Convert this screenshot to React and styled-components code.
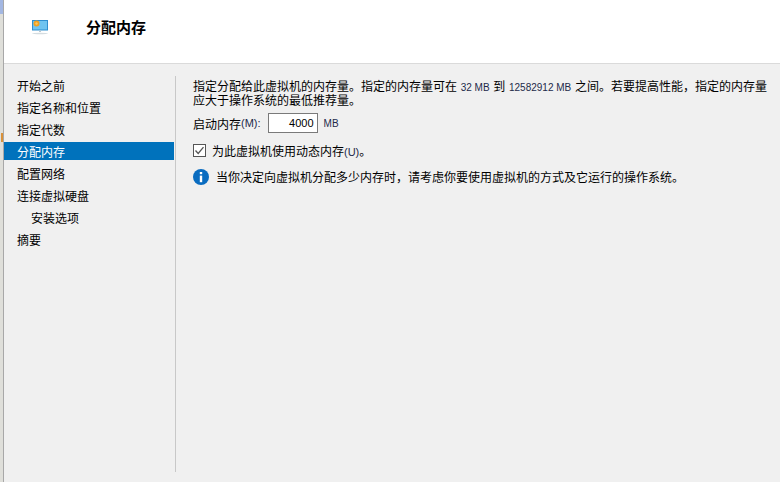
import React from "react";
import styled, { createGlobalStyle } from "styled-components";

const Global = createGlobalStyle`
  html, body {
    margin: 0;
    padding: 0;
    width: 780px;
    height: 482px;
    overflow: hidden;
    background: #f0f0f0;
  }
  body {
    font-family: "Noto Sans CJK SC", "Liberation Sans", sans-serif;
    font-size: 12px;
    color: #000;
  }
`;

const Window = styled.div`
  width: 780px;
  height: 482px;
  display: flex;
`;

// strip of the window behind this one
const LeftEdge = styled.div`
  width: 4px;
  flex-shrink: 0;
  display: flex;
  flex-direction: column;
  background: #dfdfda;
  border-right: 1px solid #a8a8a8;
  box-sizing: border-box;
`;

const EdgeTop = styled.div`
  height: 14px;
  background: #a3b7e2;
`;

const EdgeTick = styled.div`
  width: 2px;
  height: 9px;
  margin: 119px 0 0 1px;
  background: #d9913a;
`;

const Content = styled.div`
  flex: 1;
  min-width: 0;
  display: flex;
  flex-direction: column;
`;

const Banner = styled.header`
  height: 64px;
  flex-shrink: 0;
  box-sizing: border-box;
  display: flex;
  align-items: center;
  padding-left: 28px;
  padding-bottom: 9px;
  background: #fff;
  border-bottom: 1px solid #dadada;
`;

const Heading = styled.h1`
  margin: 0 0 0 37px;
  font-size: 15px;
  font-weight: 700;
  line-height: 20px;
`;

const Body = styled.div`
  flex: 1;
  min-height: 0;
  display: flex;
  padding-top: 12px;
  padding-bottom: 10px;
  background: #f0f0f0;
`;

const Nav = styled.nav`
  width: 171px;
  flex-shrink: 0;
  display: flex;
  flex-direction: column;
  border-right: 1px solid #c8c8c8;
`;

const NavItem = styled.div`
  height: 18px;
  margin-bottom: 4px;
  margin-right: 1px;
  line-height: 20px;
  font-size: 12px;
  white-space: nowrap;
  padding-left: ${({ $sub }) => ($sub ? 27 : 13)}px;
  background: ${({ $active }) => ($active ? "#0072bc" : "transparent")};
  color: ${({ $active }) => ($active ? "#fff" : "#000")};
`;

const Main = styled.main`
  flex: 1;
  min-width: 0;
  padding: 3px 0 0 17px;
  display: flex;
  flex-direction: column;
`;

const Intro = styled.p`
  margin: 0;
  width: 580px;
  font-size: 12px;
  line-height: 13px;
`;

const Small = styled.span`
  font-family: "Liberation Sans", sans-serif;
  font-size: 10px;
  line-height: 10px;
  color: #1d2a4a;
  margin: 0 1px;
`;

const Key = styled.span`
  font-family: "Liberation Sans", sans-serif;
  font-size: 11px;
  color: #1d2a4a;
`;

const Unit = styled.span`
  font-family: "Liberation Sans", sans-serif;
  font-size: 10px;
  color: #1d2a4a;
  padding-top: 1px;
`;

const MemoryRow = styled.div`
  display: flex;
  align-items: center;
  height: 20px;
  margin-top: 7px;
`;

const Field = styled.div`
  width: 50px;
  height: 20px;
  box-sizing: border-box;
  margin-left: 7px;
  margin-right: 6px;
  padding-right: 3px;
  border: 1px solid #7a7a7a;
  background: #fff;
  text-align: right;
  font-family: "Liberation Sans", sans-serif;
  font-size: 11px;
  line-height: 18px;
`;

const CheckRow = styled.div`
  display: flex;
  align-items: center;
  gap: 6px;
  height: 14px;
  margin-top: 10px;
`;

const Check = styled.svg`
  width: 13px;
  height: 13px;
  flex-shrink: 0;
`;

const InfoRow = styled.div`
  display: flex;
  align-items: center;
  gap: 7px;
  height: 17px;
  margin-top: 11px;
`;

const InfoIcon = styled.svg`
  width: 16px;
  height: 16px;
  flex-shrink: 0;
`;

const steps = [
  { label: "开始之前" },
  { label: "指定名称和位置" },
  { label: "指定代数" },
  { label: "分配内存", active: true },
  { label: "配置网络" },
  { label: "连接虚拟硬盘" },
  { label: "安装选项", sub: true },
  { label: "摘要" },
];

export default function App() {
  return (
    <Window>
      <Global />
      <LeftEdge>
        <EdgeTop />
        <EdgeTick />
      </LeftEdge>
      <Content>
        <Banner>
          <svg width="17" height="15" viewBox="0 0 17 15" aria-hidden="true">
            <rect x="0" y="0" width="16" height="10.5" fill="#2f8fd0" />
            <rect x="1" y="1" width="14" height="8.5" fill="#6fc4f0" />
            <circle cx="4.5" cy="3.5" r="3" fill="#f0a020" />
            <circle cx="4.5" cy="3.5" r="1.2" fill="#f8c860" />
            <rect x="7" y="10.5" width="2" height="1.5" fill="#b8c8d0" />
            <ellipse cx="8" cy="13.5" rx="8" ry="0.8" fill="#d4dce0" />
          </svg>
          <Heading>分配内存</Heading>
        </Banner>
        <Body>
          <Nav>
            {steps.map((s) => (
              <NavItem key={s.label} $active={s.active} $sub={s.sub}>
                {s.label}
              </NavItem>
            ))}
          </Nav>
          <Main>
            <Intro>
              指定分配给此虚拟机的内存量。指定的内存量可在 <Small>32 MB</Small> 到 <Small>12582912 MB</Small> 之间。若要提高性能，指定的内存量应大于操作系统的最低推荐量。
            </Intro>
            <MemoryRow>
              启动内存<Key>(M):</Key>
              <Field>4000</Field>
              <Unit>MB</Unit>
            </MemoryRow>
            <CheckRow>
              <Check viewBox="0 0 13 13">
                <rect x="0.5" y="0.5" width="12" height="12" fill="#fff" stroke="#555" />
                <path d="M2.5 6.5 L5.2 9.5 L10.5 3.2" fill="none" stroke="#555" strokeWidth="1.3" />
              </Check>
              <span>为此虚拟机使用动态内存<Key>(U)</Key>。</span>
            </CheckRow>
            <InfoRow>
              <InfoIcon viewBox="0 0 16 16" aria-hidden="true">
                <circle cx="8" cy="8" r="8" fill="#0a6cc0" />
                <rect x="6.8" y="3" width="2.4" height="2.2" fill="#fff" />
                <rect x="6.8" y="6.6" width="2.4" height="6.6" fill="#fff" />
              </InfoIcon>
              当你决定向虚拟机分配多少内存时，请考虑你要使用虚拟机的方式及它运行的操作系统。
            </InfoRow>
          </Main>
        </Body>
      </Content>
    </Window>
  );
}
